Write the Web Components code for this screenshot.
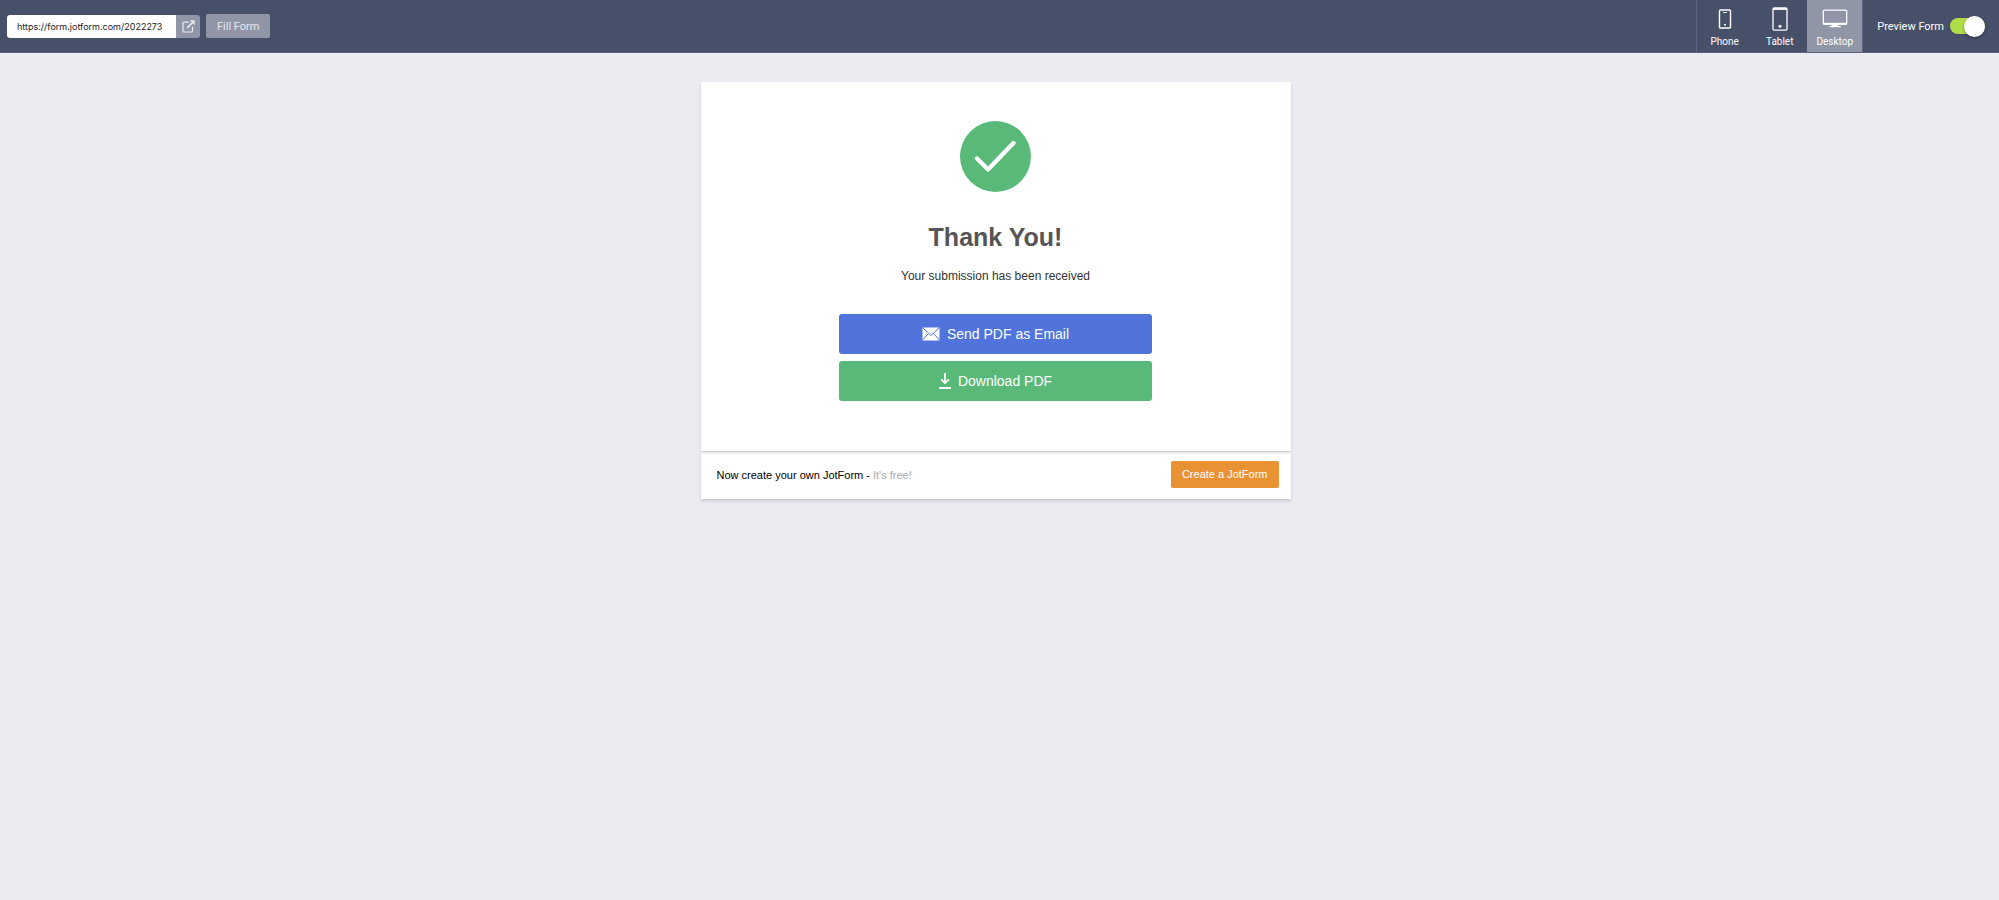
<!DOCTYPE html>
<html lang="en">
<head>
<meta charset="UTF-8">
<title>Thank You</title>
<style>
  body {
    margin: 0;
    min-height: 100vh;
    background: #ebecf1;
    font-family: "Liberation Sans", Arial, sans-serif;
  }
</style>
</head>
<body>

<preview-bar>
  <url-box slot="start" url="https://form.jotform.com/2022273"></url-box>
  <device-tab icon="phone">Phone</device-tab>
  <device-tab icon="tablet">Tablet</device-tab>
  <device-tab icon="desktop" active>Desktop</device-tab>
  <toggle-switch slot="end">Preview Form</toggle-switch>
</preview-bar>

<thank-you-card>
  <span slot="title">Thank You!</span>
  <span slot="message">Your submission has been received</span>
  <action-button slot="actions" icon="mail" color="#5074dc">Send PDF as Email</action-button>
  <action-button slot="actions" icon="download" color="#59b978">Download PDF</action-button>
</thank-you-card>

<script>
const ICONS = {
  phone: `<svg width="14" height="20" viewBox="0 0 14 20" fill="none" stroke="#fff">
    <rect x="1.5" y="1" width="11" height="18" rx="1" stroke-width="1.4"/>
    <path d="M5 3.5h4"/><circle cx="7" cy="15.8" r="1" fill="#fff" stroke="none"/></svg>`,
  tablet: `<svg width="18" height="24" viewBox="0 0 18 24" fill="none" stroke="#fff">
    <rect x="2" y=".8" width="14" height="22.4" rx="1.5" stroke-width="1.3"/>
    <path d="M2 2h14" stroke-width="1.8"/><circle cx="9" cy="19.3" r="1.5" fill="#fff" stroke="none"/></svg>`,
  desktop: `<svg width="26" height="20" viewBox="0 0 26 20" fill="none" stroke="#fff">
    <rect x="1.3" y="1.2" width="23.4" height="14" rx="1" stroke-width="1.3"/>
    <path d="M1.3 14.7h23.4" stroke-width="1.8"/><path d="M10 15h6l.6 2h2v1.3H7.500V17h2z" fill="#fff" stroke="none"/></svg>`,
  external: `<svg width="13" height="13" viewBox="0 0 13 13" fill="none" stroke="#e8eaf0" stroke-width="1.2">
    <path d="M7 2.200H2a1 1 0 0 0-1 1V11a1 1 0 0 0 1 1H9.500a1 1 0 0 0 1-1V6.500"/>
    <path d="M5.200 8L10.500 2.500" stroke-width="1.800"/>
    <path d="M7.800 .3h4.900V5.200z" fill="#e8eaf0" stroke="none"/></svg>`,
  mail: `<svg width="18" height="14" viewBox="0 0 18 14">
    <rect x=".5" y=".5" width="17" height="13" rx=".5" fill="#fff"/>
    <path d="M.5.500L9 8.500 17.500.500M.5 13L6.500 6.500M17.500 13L11.500 6.500" fill="none" stroke="#5074dc"/></svg>`,
  download: `<svg width="12" height="16" viewBox="0 0 12 16" fill="none" stroke="#fff" stroke-width="1.800">
    <path d="M6 0v10M2.200 6.300L6 10.100l3.800-3.800M0 15h12"/></svg>`
};

class PreviewBar extends HTMLElement {
  constructor() {
    super();
    this.attachShadow({ mode: 'open' });
  }

  connectedCallback() {
    this.shadowRoot.innerHTML = `
      <style>
        :host {
          display: block;
          font-family: Roboto, sans-serif;
          color: #fff;
        }
        header {
          display: flex;
          height: 52px;
          border-bottom: 1px solid #5d667d;
          background: #465069;
        }
        .start {
          display: flex;
          align-items: center;
          flex: 1;
          gap: 6px;
          padding: 0 7px;
        }
        .fill {
          height: 24px;
          padding: 0 11px;
          border: none;
          border-radius: 2px;
          background: #9196a6;
          color: #e6e8ee;
          font: 11px Roboto, sans-serif;
          cursor: pointer;
        }
        nav {
          display: flex;
          border-left: 1px solid #5d667d;
          border-right: 1px solid #5d667d;
        }
        .end {
          display: flex;
          align-items: center;
          padding: 0 14px;
        }
      </style>
      <header>
        <div class="start">
          <slot name="start"></slot>
          <button class="fill" type="button">Fill Form</button>
        </div>
        <nav><slot></slot></nav>
        <div class="end"><slot name="end"></slot></div>
      </header>
    `;
  }
}

class UrlBox extends HTMLElement {
  constructor() {
    super();
    this.attachShadow({ mode: 'open' });
  }

  connectedCallback() {
    const url = this.getAttribute('url') || '';

    this.shadowRoot.innerHTML = `
      <style>
        :host {
          display: flex;
          height: 23px;
        }
        input {
          box-sizing: border-box;
          width: 169px;
          padding: 0 9px 0 10px;
          border: none;
          border-radius: 3px 0 0 3px;
          background: #fff;
          color: #222;
          font: 9px Inter, sans-serif;
        }
        a {
          display: flex;
          align-items: center;
          justify-content: center;
          width: 24px;
          border-radius: 0 3px 3px 0;
          background: #9196a6;
        }
      </style>
      <input type="text" value="${url}" aria-label="Form URL" readonly>
      <a href="#" aria-label="Open form in new tab">${ICONS.external}</a>
    `;
  }
}

class DeviceTab extends HTMLElement {
  constructor() {
    super();
    this.attachShadow({ mode: 'open' });
  }

  connectedCallback() {
    const icon = this.getAttribute('icon');

    this.shadowRoot.innerHTML = `
      <style>
        :host {
          display: flex;
        }
        button {
          display: flex;
          flex-direction: column;
          align-items: center;
          width: 55px;
          padding: 3px 0;
          border: none;
          background: none;
          color: inherit;
          font: 10px/14px Roboto, sans-serif;
          cursor: pointer;
        }
        :host([active]) button {
          background: #9196a6;
        }
        .icon {
          display: flex;
          flex: 1;
          align-items: center;
        }
      </style>
      <button type="button" aria-pressed="${this.hasAttribute('active')}">
        <span class="icon">${ICONS[icon]}</span>
        <slot></slot>
      </button>
    `;
  }
}

class ToggleSwitch extends HTMLElement {
  constructor() {
    super();
    this.attachShadow({ mode: 'open' });
  }

  connectedCallback() {
    this.shadowRoot.innerHTML = `
      <style>
        :host {
          display: block;
        }
        label {
          display: flex;
          align-items: center;
          gap: 6px;
          font-size: 11px;
          cursor: pointer;
        }
        input {
          appearance: none;
          display: flex;
          align-items: center;
          width: 35px;
          height: 16px;
          margin: 0;
          border-radius: 8px;
          background: #7c849a;
        }
        input::before {
          content: "";
          width: 21px;
          height: 21px;
          flex: none;
          border-radius: 50%;
          background: #fff;
          box-shadow: 0 1px 3px rgba(0, 0, 0, 0.4);
        }
        input:checked {
          justify-content: flex-end;
          background: #b0dc48;
        }
      </style>
      <label><slot></slot><input type="checkbox" role="switch" checked></label>
    `;
  }
}

class ThankYouCard extends HTMLElement {
  constructor() {
    super();
    this.attachShadow({ mode: 'open' });
  }

  connectedCallback() {
    this.shadowRoot.innerHTML = `
      <style>
        :host {
          display: block;
          padding: 29px 8px 29px 0;
        }
        .card {
          max-width: 590px;
          margin: 0 auto;
        }
        main, footer {
          background: #fff;
          box-shadow: 0 2px 3px rgba(0, 0, 0, 0.15);
        }
        main {
          position: relative;
          display: flex;
          flex-direction: column;
          align-items: center;
          padding: 39px 20px 50px;
          text-align: center;
        }
        h1 {
          margin: 30px 0 0;
          color: #555;
          font-size: 25px;
          line-height: 30px;
        }
        p {
          margin: 0;
        }
        .message {
          margin-top: 16px;
          color: #333;
          font-size: 12px;
          line-height: 16px;
        }
        .actions {
          display: flex;
          flex-direction: column;
          gap: 7px;
          width: 100%;
          max-width: 313px;
          margin-top: 30px;
        }
        footer {
          display: flex;
          align-items: center;
          justify-content: space-between;
          margin-top: 1px;
          padding: 9px 12px 11px 16px;
          font-size: 11px;
          color: #000;
        }
        em {
          color: #aaa;
          font-style: normal;
        }
        footer a {
          padding: 0 11px;
          border-radius: 2px;
          background: #e99234;
          color: #fff;
          line-height: 27px;
          text-decoration: none;
        }
      </style>
      <div class="card">
        <main>
          <svg width="71" height="71" viewBox="0 0 71 71" aria-hidden="true">
            <circle cx="35.500" cy="35.500" r="35.500" fill="#59b978"/>
            <path d="M17 37.500L28 48.500L53.500 22" fill="none" stroke="#fff" stroke-width="4.400" stroke-linecap="round" stroke-linejoin="round"/>
          </svg>
          <h1><slot name="title"></slot></h1>
          <p class="message"><slot name="message"></slot></p>
          <div class="actions"><slot name="actions"></slot></div>
        </main>
        <footer>
          <p>Now create your own JotForm - <em>It's free!</em></p>
          <a href="#">Create a JotForm</a>
        </footer>
      </div>
    `;
  }
}

class ActionButton extends HTMLElement {
  constructor() {
    super();
    this.attachShadow({ mode: 'open' });
  }

  connectedCallback() {
    const icon = this.getAttribute('icon');
    const color = this.getAttribute('color') || '#555';

    this.shadowRoot.innerHTML = `
      <style>
        :host {
          display: block;
        }
        button {
          display: flex;
          align-items: center;
          justify-content: center;
          gap: 7px;
          width: 100%;
          height: 40px;
          border: none;
          border-radius: 3px;
          background: ${color};
          color: #fff;
          font-family: inherit;
          font-size: 14px;
          cursor: pointer;
        }
      </style>
      <button type="button">${ICONS[icon]}<slot></slot></button>
    `;
  }
}

customElements.define('preview-bar', PreviewBar);
customElements.define('url-box', UrlBox);
customElements.define('device-tab', DeviceTab);
customElements.define('toggle-switch', ToggleSwitch);
customElements.define('thank-you-card', ThankYouCard);
customElements.define('action-button', ActionButton);
</script>
</body>
</html>
